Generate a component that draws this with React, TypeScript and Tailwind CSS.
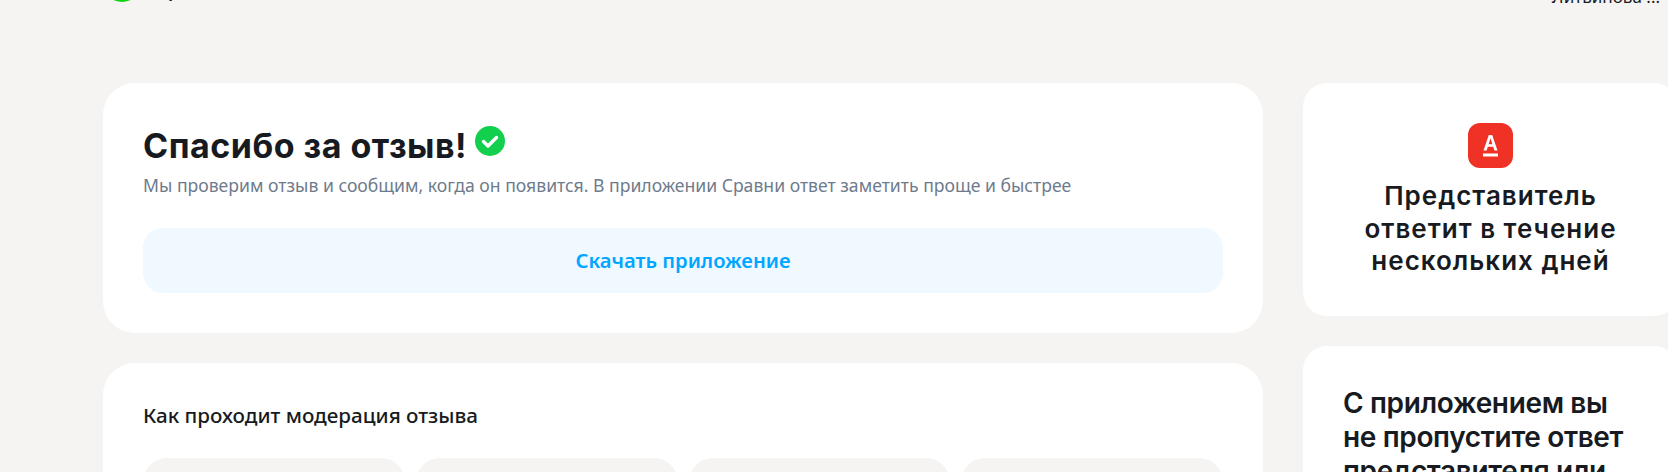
export default function App() {
  return (
    <div className="h-[472px] w-[1668px] overflow-hidden bg-[#f5f4f2] font-['Noto_Sans',sans-serif]">
      <header className="-mt-[36px] flex h-[119px] items-start justify-between pl-[103px] pr-[8px]">
        <div className="flex items-start">
          <div className="h-[38px] w-[38px] rounded-full bg-[#0fd30f]" />
          <span className="mt-[15px] ml-[27px] text-[18px] leading-[22px] font-semibold text-[#171b21]">р</span>
        </div>
        <span className="mt-[23px] text-[17px] leading-[20px] text-[#171b21]">Литвинова ...</span>
      </header>
      <main className="grid w-[1678px] grid-cols-[1160px_375px] gap-x-[40px] pl-[103px]">
        <div className="flex flex-col gap-[30px]">
          <section className="flex h-[250px] flex-col rounded-[32px] bg-white px-[40px] pt-[40px]">
            <div className="flex items-start">
              <h1 className="mt-[4px] font-['Inter',sans-serif] text-[34px] leading-[38px] font-bold tracking-[0.5px] text-[#171b21]">
                Спасибо за отзыв!
              </h1>
              <svg className="mt-[3px] ml-[8px]" width="30" height="30" viewBox="0 0 30 30">
                <circle cx="15" cy="15" r="15" fill="#12d04e" />
                <path d="M8.5 15.5l4.5 4.5 8.5-8.5" fill="none" stroke="#fff" strokeWidth="3.4" strokeLinecap="round" strokeLinejoin="round" />
              </svg>
            </div>
            <p className="mt-[8px] text-[17.6px] leading-[24px] text-[#6e7b8c]">
              Мы проверим отзыв и сообщим, когда он появится. В приложении Сравни ответ заметить проще и быстрее
            </p>
            <button className="mt-[31px] h-[65px] w-full rounded-[20px] bg-[#f0f9ff] text-[20.2px] font-semibold text-[#00a6ff]">
              Скачать приложение
            </button>
          </section>
          <section className="h-[300px] rounded-[32px] bg-white px-[40px] pt-[40px]">
            <h2 className="text-[20.6px] leading-[24px] font-medium text-[#171b21]">Как проходит модерация отзыва</h2>
            <div className="mt-[31px] grid grid-cols-4 gap-[11px]">
              <div className="h-[120px] rounded-[24px] bg-[#f5f4f2]" />
              <div className="h-[120px] rounded-[24px] bg-[#f5f4f2]" />
              <div className="h-[120px] rounded-[24px] bg-[#f5f4f2]" />
              <div className="h-[120px] rounded-[24px] bg-[#f5f4f2]" />
            </div>
          </section>
        </div>
        <div className="flex flex-col gap-[30px]">
          <section className="flex h-[233px] flex-col items-center rounded-[24px] bg-white pt-[40px]">
            <svg width="45" height="45" viewBox="0 0 45 45">
              <rect width="45" height="45" rx="12" fill="#f03226" />
              <path d="M15.5 27.5L20.8 12h3.4L29.5 27.5h-3.1l-1.2-3.7h-5.4l-1.2 3.7zM20.6 21.2h3.8L22.5 15.2z" fill="#fff" fillRule="evenodd" />
              <rect x="15" y="30.5" width="15" height="3" fill="#fff" />
            </svg>
            <h3 className="mt-[12px] text-center font-['Inter',sans-serif] text-[26px] leading-[32.5px] font-semibold tracking-[1px] text-[#171b21]">
              Представитель<br />ответит в течение<br />нескольких дней
            </h3>
          </section>
          <section className="h-[300px] rounded-[24px] bg-white pl-[40px] pt-[40px]">
            <h3 className="font-['Inter',sans-serif] text-[28px] leading-[34px] font-semibold tracking-[-0.35px] text-[#171b21]">
              С приложением вы<br />не пропустите ответ<br />представителя или
            </h3>
          </section>
        </div>
      </main>
    </div>
  );
}
